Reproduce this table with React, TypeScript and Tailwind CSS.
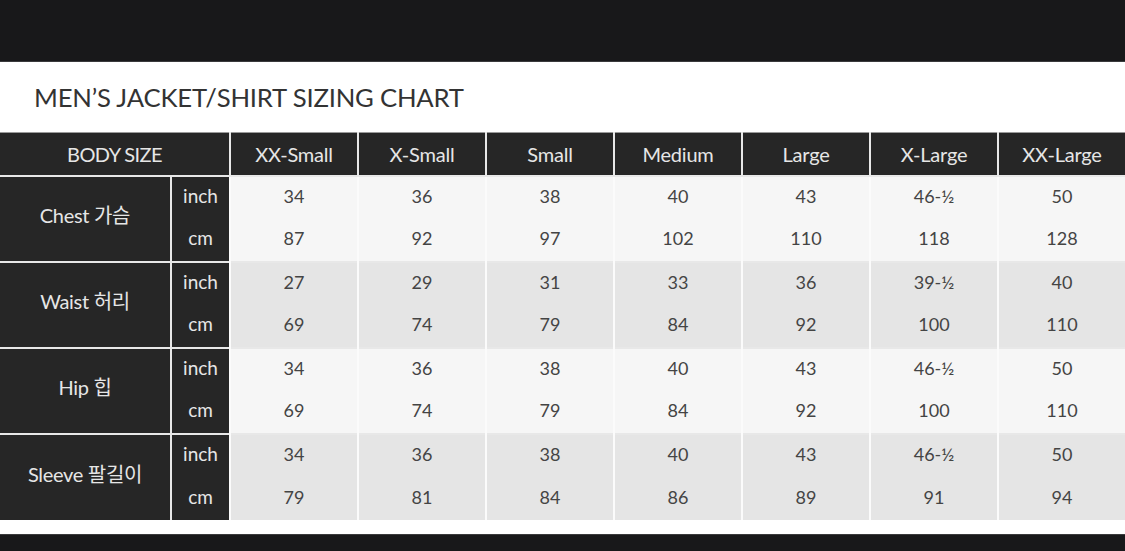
const SIZES = ["XX-Small", "X-Small", "Small", "Medium", "Large", "X-Large", "XX-Large"]

const ROWS = [
  { label: "Chest 가슴", bg: "bg-[#f6f6f6]", inch: ["34", "36", "38", "40", "43", "46-½", "50"], cm: ["87", "92", "97", "102", "110", "118", "128"] },
  { label: "Waist 허리", bg: "bg-[#e5e5e5]", inch: ["27", "29", "31", "33", "36", "39-½", "40"], cm: ["69", "74", "79", "84", "92", "100", "110"] },
  { label: "Hip 힙", bg: "bg-[#f6f6f6]", inch: ["34", "36", "38", "40", "43", "46-½", "50"], cm: ["69", "74", "79", "84", "92", "100", "110"] },
  { label: "Sleeve 팔길이", bg: "bg-[#e5e5e5]", inch: ["34", "36", "38", "40", "43", "46-½", "50"], cm: ["79", "81", "84", "86", "89", "91", "94"] },
]

const font = "font-['Lato','Noto_Sans_CJK_KR',sans-serif]"

export default function App() {
  return (
    <div className={`w-[1125px] h-[551px] bg-white flex flex-col overflow-hidden ${font}`}>
      {/* top dark bar */}
      <div className="h-[62px] bg-[#18181a] border-b border-[#3a3a3c]" />

      <h1 className="pl-[34px] pt-[21px] h-[70px] text-[25.7px] leading-[28px] text-[#333] tracking-[-0.2px]">
        MEN’S JACKET/SHIRT SIZING CHART
      </h1>

      <table className="w-[1125px] table-fixed border-collapse text-[18px]">
        <colgroup>
          <col className="w-[171px]" />
          <col className="w-[59px]" />
          {SIZES.map((s) => (
            <col key={s} className="w-[128px]" />
          ))}
        </colgroup>
        <thead>
          <tr className="h-[43px] bg-[#262626] text-[#e6e6e6] text-[20px]">
            <th colSpan={2} className="font-normal border-t border-[#9a9a9a] border-r-2 border-r-[#e8e8e8] tracking-[-0.6px]">
              BODY SIZE
            </th>
            {SIZES.map((s) => (
              <th key={s} className="font-normal border-t border-[#9a9a9a] border-x-2 border-x-[#e8e8e8] first:border-l-0 tracking-[-0.2px]">
                {s}
              </th>
            ))}
          </tr>
        </thead>
        <tbody>
          {ROWS.map((r) => (
            <>
              <tr key={r.label + "i"} className="h-[43px]">
                <td
                  rowSpan={2}
                  className="bg-[#262626] text-[#e6e6e6] text-center text-[20px] border-t-2 border-t-[#e8e8e8] border-r-2 border-r-[#e8e8e8] pb-[7px] tracking-[-0.3px]"
                >
                  {r.label}
                </td>
                <td className="bg-[#262626] text-[#e6e6e6] text-center text-[19px] border-t-2 border-t-[#e8e8e8] pb-[2px]">inch</td>
                {r.inch.map((v, i) => (
                  <td key={i} className={`${r.bg} text-[#444] text-center border-t-2 border-t-[#e8e8e8] border-x-2 border-x-[#fbfbfb] pb-[2px]`}>
                    {v}
                  </td>
                ))}
              </tr>
              <tr key={r.label + "c"} className="h-[43px]">
                <td className="bg-[#262626] text-[#e6e6e6] text-center text-[19px] pb-[2px]">cm</td>
                {r.cm.map((v, i) => (
                  <td key={i} className={`${r.bg} text-[#444] text-center border-x-2 border-x-[#fbfbfb] pb-[2px]`}>
                    {v}
                  </td>
                ))}
              </tr>
            </>
          ))}
        </tbody>
      </table>

      <div className="h-[14px] bg-white" />
      {/* bottom dark bar */}
      <div className="flex-1 bg-[#18181a] border-t border-[#3a3a3c]" />
    </div>
  )
}
